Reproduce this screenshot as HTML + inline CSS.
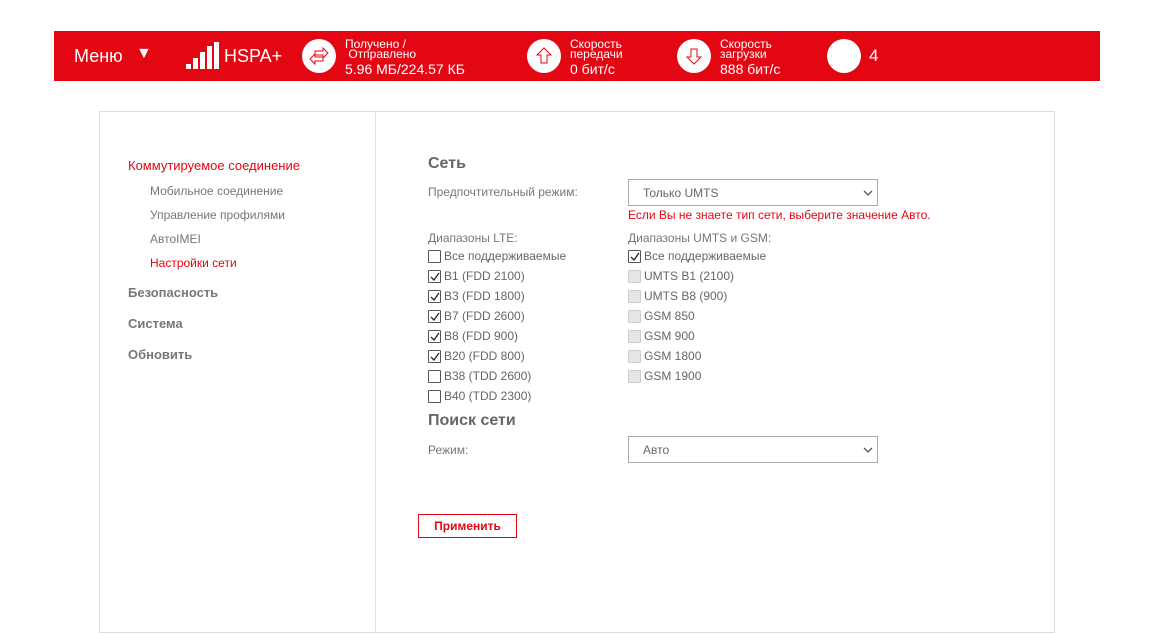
<!DOCTYPE html>
<html><head><meta charset="utf-8"><style>
*{margin:0;padding:0;box-sizing:border-box}
body{width:1150px;height:634px;background:#fff;font-family:"Liberation Sans",Arial,sans-serif;position:relative;overflow:hidden;color:#666}
.a{position:absolute;white-space:nowrap}
#hdr{position:absolute;left:54px;top:31px;width:1046px;height:50px;background:#e30613;color:#fff}
.circ{position:absolute;width:34px;height:34px;border-radius:50%;background:#fff;top:8px}
.sm{font-size:12px;line-height:10px;color:#fff}
#panel{position:absolute;left:99px;top:111px;width:956px;height:522px;border:1px solid #ddd}
#div{position:absolute;left:375px;top:111px;width:1px;height:522px;background:#ddd}
.sub{font-size:12px;color:#777}
.top{font-size:13px;font-weight:bold;color:#777}
.lbl{font-size:12px;color:#777}
.sel{position:absolute;width:250px;height:27px;border:1px solid #aaa;background:#fff;font-size:12px;color:#666;padding:6px 0 0 14px}
.sel svg{position:absolute;right:4px;top:10px}
.cb{position:absolute;width:13px;height:13px;border:1px solid #555;background:#fff;border-radius:1px}
.cb.d{border-color:#ccc;background:#e6e6e6}
.ct{font-size:12px;color:#666}
</style></head><body>
<div id="hdr">
 <div class="a" style="left:20px;top:15px;font-size:18px">Меню</div>
 <div class="a" style="left:82px;top:14px;font-size:16px">▼</div>
 <svg class="a" style="left:132px;top:11px" width="34" height="27"><rect x="0" y="22" width="5" height="5" fill="#fff"/><rect x="7" y="16" width="5" height="11" fill="#fff"/><rect x="14" y="10" width="5" height="17" fill="#fff"/><rect x="21" y="4" width="5" height="23" fill="#fff"/><rect x="28" y="0" width="5" height="27" fill="#fff"/></svg>
 <div class="a" style="left:170px;top:15px;font-size:18px">HSPA+</div>
 <div class="circ" style="left:248px"><svg width="34" height="34"><path d="M13 12h8v-3l5 5-5 5v-3h-8z" fill="none" stroke="#e30613" stroke-width="1"/><path d="M21 18h-8v-3l-5 5 5 5v-3h8z" fill="none" stroke="#e30613" stroke-width="1"/></svg></div>
 <div class="a sm" style="left:291px;top:8px">Получено /<br>&nbsp;Отправлено</div>
 <div class="a" style="left:291px;top:30px;font-size:14px">5.96 МБ/224.57 КБ</div>
 <div class="circ" style="left:473px"><svg width="34" height="34"><path d="M17 9l-7 7h4v8h6v-8h4z" fill="none" stroke="#e30613" stroke-width="1"/></svg></div>
 <div class="a sm" style="left:516px;top:8px">Скорость<br>передачи</div>
 <div class="a" style="left:516px;top:30px;font-size:14px">0 бит/с</div>
 <div class="circ" style="left:623px"><svg width="34" height="34"><path d="M17 25l-7-7h4v-8h6v8h4z" fill="none" stroke="#e30613" stroke-width="1"/></svg></div>
 <div class="a sm" style="left:666px;top:8px">Скорость<br>загрузки</div>
 <div class="a" style="left:666px;top:30px;font-size:14px">888 бит/с</div>
 <div class="circ" style="left:773px"></div>
 <div class="a" style="left:815px;top:15px;font-size:17px">4</div>
</div>
<div id="panel"></div><div id="div"></div>
<div class="a" style="left:128px;top:158px;font-size:13px;color:#e30613">Коммутируемое соединение</div>
<div class="a sub" style="left:150px;top:184px">Мобильное соединение</div>
<div class="a sub" style="left:150px;top:208px">Управление профилями</div>
<div class="a sub" style="left:150px;top:232px">АвтоIMEI</div>
<div class="a sub" style="left:150px;top:256px;color:#e30613">Настройки сети</div>
<div class="a top" style="left:128px;top:285px">Безопасность</div>
<div class="a top" style="left:128px;top:316px">Система</div>
<div class="a top" style="left:128px;top:347px">Обновить</div>

<div class="a" style="left:428px;top:155px;font-size:16px;font-weight:bold">Сеть</div>
<div class="a lbl" style="left:428px;top:185px">Предпочтительный режим:</div>
<div class="sel" style="left:628px;top:179px">Только UMTS<svg width="10" height="6"><path d="M1 1l4 4 4-4" stroke="#555" fill="none" stroke-width="1.3"/></svg></div>
<div class="a" style="left:628px;top:208px;font-size:12px;color:#e30613">Если Вы не знаете тип сети, выберите значение Авто.</div>
<div class="a lbl" style="left:428px;top:231px">Диапазоны LTE:</div>
<div class="a lbl" style="left:628px;top:231px">Диапазоны UMTS и GSM:</div>
<div id="rows"></div>
<div class="a" style="left:428px;top:412px;font-size:16px;font-weight:bold">Поиск сети</div>
<div class="a lbl" style="left:428px;top:443px">Режим:</div>
<div class="sel" style="left:628px;top:436px">Авто<svg width="10" height="6"><path d="M1 1l4 4 4-4" stroke="#555" fill="none" stroke-width="1.3"/></svg></div>
<div class="a" style="left:418px;top:514px;width:99px;height:24px;border:1px solid #e30613;color:#e30613;font-size:12px;font-weight:bold;text-align:center;line-height:22px">Применить</div>
<script>
var L=[["Все поддерживаемые",0],["B1 (FDD 2100)",1],["B3 (FDD 1800)",1],["B7 (FDD 2600)",1],["B8 (FDD 900)",1],["B20 (FDD 800)",1],["B38 (TDD 2600)",0],["B40 (TDD 2300)",0]];
var R=[["Все поддерживаемые",1,0],["UMTS B1 (2100)",0,1],["UMTS B8 (900)",0,1],["GSM 850",0,1],["GSM 900",0,1],["GSM 1800",0,1],["GSM 1900",0,1]];
var h="",ck='<svg width="11" height="11" style="position:absolute;left:0;top:0"><path d="M2 6l3 3 5-7" stroke="#222" fill="none" stroke-width="1.3"/></svg>';
function row(x,y,t,c,d){h+='<div class="cb'+(d?' d':'')+'" style="left:'+x+'px;top:'+(y+1)+'px">'+(c?ck:'')+'</div><div class="a ct" style="left:'+(x+16)+'px;top:'+y+'px">'+t+'</div>';}
L.forEach(function(r,i){row(428,249+i*20,r[0],r[1],0)});
R.forEach(function(r,i){row(628,249+i*20,r[0],r[1],r[2])});
document.getElementById("rows").outerHTML=h;
</script>
</body></html>
